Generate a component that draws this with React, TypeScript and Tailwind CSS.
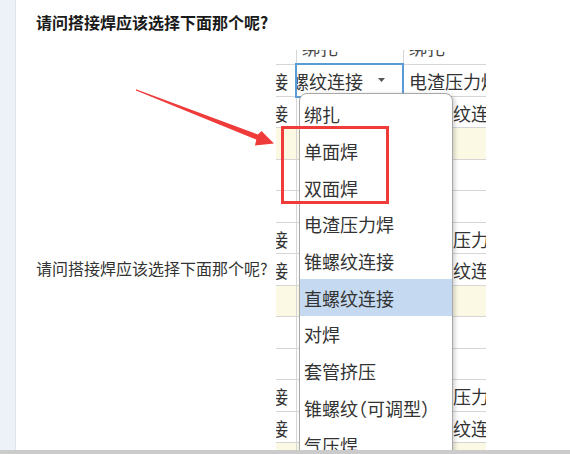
import React from "react";

const rowsData: { a: boolean; c: string; cpad: string; yellow: boolean }[] = [
  { a: true, c: "电渣压力焊", cpad: "pl-[5px]", yellow: false },
  { a: true, c: "锥螺纹连接", cpad: "pl-[13px]", yellow: false },
  { a: false, c: "", cpad: "", yellow: true },
  { a: false, c: "", cpad: "", yellow: false },
  { a: false, c: "", cpad: "", yellow: false },
  { a: true, c: "电渣压力焊", cpad: "pl-[13px]", yellow: false },
  { a: true, c: "锥螺纹连接", cpad: "pl-[13px]", yellow: false },
  { a: false, c: "", cpad: "", yellow: true },
  { a: false, c: "", cpad: "", yellow: false },
  { a: false, c: "", cpad: "", yellow: false },
  { a: true, c: "电渣压力焊", cpad: "pl-[13px]", yellow: false },
  { a: true, c: "锥螺纹连接", cpad: "pl-[13px]", yellow: false },
  { a: false, c: "", cpad: "", yellow: true },
  { a: false, c: "", cpad: "", yellow: false },
];

const items = [
  "绑扎",
  "单面焊",
  "双面焊",
  "电渣压力焊",
  "锥螺纹连接",
  "直螺纹连接",
  "对焊",
  "套管挤压",
  "锥螺纹（可调型）",
  "气压焊",
  "冷挤压",
];

function Sheet() {
  return (
    <div className="relative w-[210px] h-[435px] shrink-0 overflow-hidden bg-white text-[18px] text-[#333]">
      {/* header row */}
      <div className="flex h-[14px]">
        <div className="w-[20px] shrink-0" />
        <div className="w-[107px] shrink-0 border-l border-[#d6d6d6] overflow-hidden pl-[5px]">
          <span className="block leading-[18px] mt-[-12px] text-[#444]">绑扎</span>
        </div>
        <div className="flex-1 border-l border-[#d6d6d6] overflow-hidden pl-[5px]">
          <span className="block leading-[18px] mt-[-12px] text-[#444] whitespace-nowrap">绑扎</span>
        </div>
      </div>
      {rowsData.map((r, i) => (
        <div
          key={i}
          className={`flex h-[31.5px] border-t border-[#d6d6d6] ${r.yellow ? "bg-[#fbf8e4]" : "bg-white"}`}
        >
          <div className="w-[20px] shrink-0 flex justify-end items-center overflow-hidden pr-[8px] pt-[2px]">
            {r.a && <span className="whitespace-nowrap leading-[20px]">螺纹连接</span>}
          </div>
          <div className="w-[107px] shrink-0 border-l border-[#d6d6d6] overflow-hidden flex items-center pt-[2px]">
            {i === 0 && (
              <>
                <span className="ml-[-6px] whitespace-nowrap leading-[20px]">螺纹连接</span>
                <svg width="7" height="4" viewBox="0 0 7 4" className="ml-[15px] mt-[-2px]">
                  <polygon points="0,0 7,0 3.5,4" fill="#555" />
                </svg>
              </>
            )}
          </div>
          <div className={`flex-1 border-l border-[#d6d6d6] overflow-hidden flex items-center pt-[2px] ${r.cpad}`}>
            {r.c && <span className="whitespace-nowrap leading-[20px]">{r.c}</span>}
          </div>
        </div>
      ))}

      {/* selected cell border */}
      <div className="absolute left-[19px] top-[13px] w-[109px] h-[35px] border-2 border-[#5b9bd5]" />

      {/* dropdown */}
      <div className="absolute left-[23px] top-[43px] w-[154px] h-[420px] bg-white border border-[#a8a8a8] rounded-t-[8px] shadow-[2px_1px_4px_rgba(0,0,0,0.18)] pt-[2px] overflow-hidden">
        {items.map((t, i) => (
          <div
            key={t}
            className={`h-[36.7px] flex items-center pl-[4px] whitespace-nowrap leading-[20px] text-[#333] [font-feature-settings:'halt'] ${i === 5 ? "bg-[#c5daf0]" : ""}`}
          >
            {t}
          </div>
        ))}
      </div>

      {/* red annotation box */}
      <div className="absolute left-[5px] top-[76px] w-[108px] h-[78px] border-[3px] border-[#f03b3b]" />
    </div>
  );
}

export default function App() {
  return (
    <div className="relative w-[570px] h-[454px] flex flex-col overflow-hidden bg-white font-['Noto_Sans_CJK_SC','Noto_Sans',sans-serif]">
      <div className="flex flex-1 min-h-0">
        <div className="w-[16px] shrink-0 bg-[#edf1f8] border-r border-[#dfe5ee]" />
        <div className="flex-1 min-w-0 pl-[20px] overflow-hidden">
          <h1 className="pt-[10px] h-[50px] text-[16px] leading-[24px] font-bold text-[#1a1a1a] whitespace-nowrap">
            请问搭接焊应该选择下面那个呢?
          </h1>
          <div className="flex items-center">
            <p className="w-[240px] shrink-0 text-[16px] leading-[24px] text-[#333] whitespace-nowrap">
              请问搭接焊应该选择下面那个呢?
            </p>
            <Sheet />
          </div>
        </div>
      </div>
      <div className="h-[4px] shrink-0 bg-[#cbcbcb]" />

      {/* red arrow annotation */}
      <svg
        className="absolute left-0 top-0 pointer-events-none"
        width="570"
        height="454"
        viewBox="0 0 570 454"
      >
        <polygon
          points="136,89.3 258,134.6 261.5,131 274,143.5 255,145.5 256.3,139.6 136,90.4"
          fill="#f03b3b"
        />
      </svg>
    </div>
  );
}
